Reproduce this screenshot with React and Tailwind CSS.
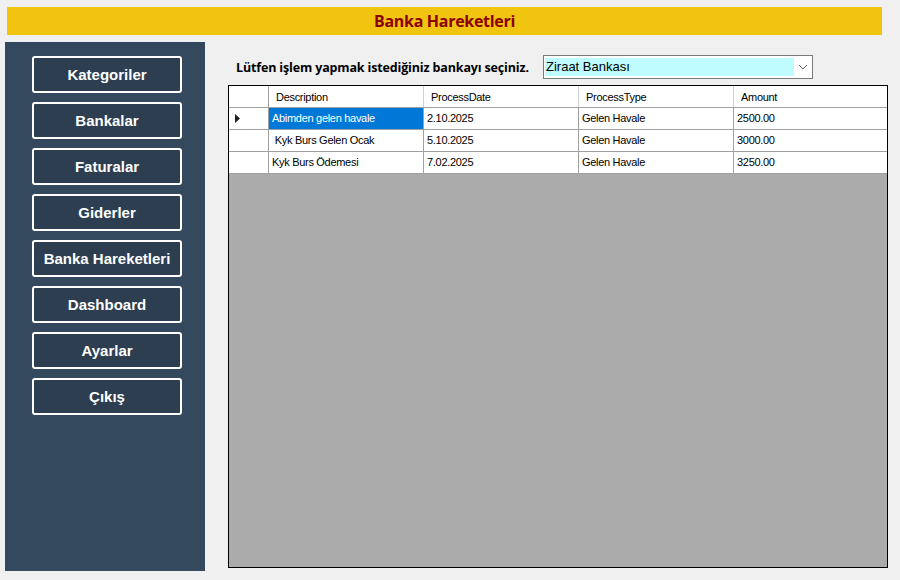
import React from "react";

const menu = ["Kategoriler", "Bankalar", "Faturalar", "Giderler", "Banka Hareketleri", "Dashboard", "Ayarlar", "Çıkış"];

const rows = [
  { d: "Abimden gelen havale", p: "2.10.2025", t: "Gelen Havale", a: "2500.00", sel: true },
  { d: "\u00a0Kyk Burs Gelen Ocak", p: "5.10.2025", t: "Gelen Havale", a: "3000.00" },
  { d: "Kyk Burs Ödemesi", p: "7.02.2025", t: "Gelen Havale", a: "3250.00" },
];

export default function App() {
  return (
    <div className="w-[900px] h-[580px] bg-[#f0f0f0] overflow-hidden flex flex-col" style={{ fontFamily: '"Liberation Sans", Arial, sans-serif' }}>
      <div className="mt-[7px] ml-[7px] w-[875px] h-[28px] bg-[#f1c40f] flex items-center justify-center">
        <span className="text-[16px] font-bold text-[#8b0000] leading-none tracking-[-0.3px]" style={{ fontFamily: '"Open Sans", sans-serif' }}>Banka Hareketleri</span>
      </div>
      <div className="flex mt-[7px]">
        <div className="ml-[5px] w-[200px] h-[529px] bg-[#34495e] pl-[27px] pt-[14px] flex flex-col gap-[9px]">
          {menu.map((m) => (
            <div key={m} className="w-[150px] h-[37px] bg-[#2c3e50] border-2 border-white rounded-[3px] flex items-center justify-center text-white font-bold text-[15px] pt-[1px]">
              {m}
            </div>
          ))}
        </div>
        <div className="ml-[23px] flex flex-col">
          <div className="flex items-center mt-[13px] h-[24px]">
            <div className="ml-[8px] w-[307px] shrink-0">
              <span className="text-[12.5px] font-bold text-black tracking-[-0.15px] whitespace-nowrap" style={{ fontFamily: '"Open Sans", sans-serif' }}>Lütfen işlem yapmak istediğiniz bankayı seçiniz.</span>
            </div>
            <div className="w-[270px] h-[24px] border border-[#7a7a7a] bg-white flex items-center pl-[1px] pr-[1px]">
              <div className="w-[249px] h-[18px] bg-[#bffcff] flex items-center pl-[1px] text-[13px] text-black">Ziraat Bankası</div>
              <div className="flex-1 flex items-center justify-center">
                <svg width="10" height="6" viewBox="0 0 10 6"><path d="M1 1 L5 5 L9 1" fill="none" stroke="#606060" strokeWidth="1" /></svg>
              </div>
            </div>
          </div>
          <div className="mt-[6px] w-[660px] h-[483px] border border-black bg-[#ababab] text-[11px] text-black tracking-[-0.3px]">
            <div className="flex h-[22px] bg-white border-b border-[#a0a0a0]">
              <div className="w-[40px] border-r border-[#a0a0a0]" />
              <div className="w-[155px] border-r border-[#d0d0d0] pl-[7px] flex items-center pt-[1px]">Description</div>
              <div className="w-[155px] border-r border-[#d0d0d0] pl-[7px] flex items-center pt-[1px]">ProcessDate</div>
              <div className="w-[155px] border-r border-[#d0d0d0] pl-[7px] flex items-center pt-[1px]">ProcessType</div>
              <div className="flex-1 pl-[7px] flex items-center pt-[1px]">Amount</div>
            </div>
            {rows.map((r, i) => (
              <div key={i} className="flex h-[22px] bg-white border-b border-[#a0a0a0]">
                <div className="w-[40px] border-r border-[#a0a0a0] flex items-center pl-[6px]">
                  {r.sel && (
                    <svg width="5" height="9" viewBox="0 0 5 9"><path d="M0 0 L5 4.5 L0 9 Z" fill="#202020" /></svg>
                  )}
                </div>
                <div className={"w-[155px] border-r border-[#a0a0a0] pl-[3px] flex items-center " + (r.sel ? "bg-[#0078d7] text-white" : "")}>{r.d}</div>
                <div className="w-[155px] border-r border-[#a0a0a0] pl-[3px] flex items-center">{r.p}</div>
                <div className="w-[155px] border-r border-[#a0a0a0] pl-[3px] flex items-center">{r.t}</div>
                <div className="flex-1 pl-[3px] flex items-center">{r.a}</div>
              </div>
            ))}
          </div>
        </div>
      </div>
    </div>
  );
}
